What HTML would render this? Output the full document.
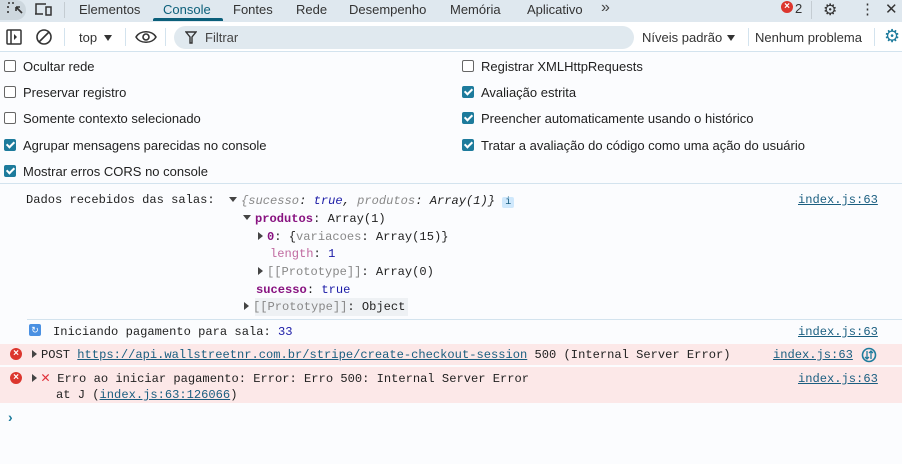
<!DOCTYPE html>
<html><head><meta charset="utf-8"><style>
*{margin:0;padding:0;box-sizing:border-box}
body{width:902px;height:464px;overflow:hidden;background:#fbfcfe;font-family:"Liberation Sans",sans-serif;font-size:13px;color:#1f1f1f;position:relative}
.a{position:absolute;white-space:nowrap}
.m{font-family:"Liberation Mono",monospace;font-size:12.1px}
.cb{position:absolute;width:12px;height:12px;border:1.5px solid #666;border-radius:2px;background:#fff}
.cb.on{background:#1d7b9c;border-color:#1d7b9c}
.cb.on:after{content:"";position:absolute;left:3px;top:0px;width:3px;height:6px;border:solid #fff;border-width:0 2px 2px 0;transform:rotate(45deg)}
.lnk{color:#1a5e80;text-decoration:underline}
.k{color:#881280}
.g{color:#888}
.b{color:#1a1aa6}
.tri{display:inline-block;width:0;height:0;border-top:4px solid transparent;border-bottom:4px solid transparent;border-left:5px solid #444;margin-right:4px}
.trd{display:inline-block;width:0;height:0;border-left:4px solid transparent;border-right:4px solid transparent;border-top:5px solid #444;margin-right:4px;vertical-align:2px}
.err{position:absolute;width:12px;height:12px;border-radius:50%;background:#dc362e;color:#fff;font-size:10px;line-height:12px;text-align:center;font-weight:bold}
</style></head><body>
<div class="a" style="left:0;top:0;width:902px;height:22px;background:#dfe8ef"></div>
<div class="a" style="left:0;top:0;width:26px;height:20px;background:#cdd7de;border-radius:0 10px 10px 0"></div>
<svg class="a" style="left:6px;top:1px" width="18" height="16"><path d="M2 2h2M6 2h2M2 5v2M2 10v2M10 6l6 6M10 6h4M10 6v4" stroke="#333" stroke-width="1.6" fill="none"/></svg>
<svg class="a" style="left:34px;top:1px" width="20" height="16"><path d="M2 13V3h10M1 13h8M12 6h5v8h-5z" stroke="#333" stroke-width="1.5" fill="none"/></svg>
<div class="a" style="left:64px;top:2px;width:1px;height:16px;background:#c4ccd2"></div>
<div class="a" style="left:79px;top:2px;color:#333">Elementos</div>
<div class="a" style="left:163px;top:2px;color:#0b5f7a">Console</div>
<div class="a" style="left:153px;top:18px;width:70px;height:3px;background:#0b5f7a;border-radius:2px 2px 0 0"></div>
<div class="a" style="left:233px;top:2px;color:#333">Fontes</div>
<div class="a" style="left:296px;top:2px;color:#333">Rede</div>
<div class="a" style="left:349px;top:2px;color:#333">Desempenho</div>
<div class="a" style="left:450px;top:2px;color:#333">Memória</div>
<div class="a" style="left:527px;top:2px;color:#333">Aplicativo</div>
<div class="a" style="left:601px;top:-1px;color:#444;font-size:16px">»</div>
<div class="err" style="left:781px;top:1px">×</div>
<div class="a" style="left:795px;top:1px;color:#333">2</div>
<div class="a" style="left:811px;top:1px;width:1px;height:18px;background:#c4ccd2"></div>
<div class="a" style="left:823px;top:0px;font-size:16px;color:#333">⚙</div>
<div class="a" style="left:860px;top:0px;font-size:15px;color:#333">⋮</div>
<div class="a" style="left:885px;top:0px;font-size:15px;color:#333">✕</div>
<div class="a" style="left:0;top:22px;width:902px;height:30px;background:#fff;border-bottom:1px solid #d3e3ee"></div>
<svg class="a" style="left:6px;top:29px" width="16" height="16"><rect x="1" y="1" width="14" height="14" rx="1" stroke="#333" stroke-width="1.5" fill="none"/><path d="M5 1v14" stroke="#333" stroke-width="1.5"/><path d="M8 5l3 3-3 3z" fill="#333"/></svg>
<svg class="a" style="left:35px;top:28px" width="18" height="18"><circle cx="9" cy="9" r="7" stroke="#333" stroke-width="1.6" fill="none"/><path d="M4 14L14 4" stroke="#333" stroke-width="1.6"/></svg>
<div class="a" style="left:64px;top:28px;width:1px;height:18px;background:#d3e3ee"></div>
<div class="a" style="left:79px;top:30px;color:#333">top</div>
<div class="a" style="left:104px;top:35px;border-left:4px solid transparent;border-right:4px solid transparent;border-top:6px solid #333"></div>
<div class="a" style="left:125px;top:28px;width:1px;height:18px;background:#d3e3ee"></div>
<svg class="a" style="left:135px;top:29px" width="22" height="16"><path d="M1 8C5 1 17 1 21 8C17 15 5 15 1 8z" stroke="#333" stroke-width="1.5" fill="none"/><circle cx="11" cy="8" r="3" stroke="#333" stroke-width="1.6" fill="none"/></svg>
<div class="a" style="left:165px;top:28px;width:1px;height:18px;background:#d3e3ee"></div>
<div class="a" style="left:174px;top:26px;width:460px;height:23px;background:#e0e9ef;border-radius:12px"></div>
<svg class="a" style="left:185px;top:31px" width="12" height="13"><path d="M1 1h10L7 6v6H5V6z" stroke="#333" stroke-width="1.4" fill="none"/></svg>
<div class="a" style="left:205px;top:30px;color:#444">Filtrar</div>
<div class="a" style="left:642px;top:30px;color:#333">Níveis padrão</div>
<div class="a" style="left:727px;top:35px;border-left:4.5px solid transparent;border-right:4.5px solid transparent;border-top:6px solid #333"></div>
<div class="a" style="left:748px;top:28px;width:1px;height:18px;background:#d3e3ee"></div>
<div class="a" style="left:755px;top:30px;color:#333">Nenhum problema</div>
<div class="a" style="left:874px;top:28px;width:1px;height:18px;background:#d3e3ee"></div>
<div class="a" style="left:884px;top:26px;font-size:18px;color:#1d7b9c">⚙</div>
<div class="cb" style="left:4px;top:60px"></div><div class="a" style="left:23px;top:59px">Ocultar rede</div>
<div class="cb" style="left:4px;top:86px"></div><div class="a" style="left:23px;top:85px">Preservar registro</div>
<div class="cb" style="left:4px;top:112px"></div><div class="a" style="left:23px;top:111px">Somente contexto selecionado</div>
<div class="cb on" style="left:4px;top:139px"></div><div class="a" style="left:23px;top:138px">Agrupar mensagens parecidas no console</div>
<div class="cb on" style="left:4px;top:165px"></div><div class="a" style="left:23px;top:164px">Mostrar erros CORS no console</div>
<div class="cb" style="left:462px;top:60px"></div><div class="a" style="left:481px;top:59px">Registrar XMLHttpRequests</div>
<div class="cb on" style="left:462px;top:86px"></div><div class="a" style="left:481px;top:85px">Avaliação estrita</div>
<div class="cb on" style="left:462px;top:112px"></div><div class="a" style="left:481px;top:111px">Preencher automaticamente usando o histórico</div>
<div class="cb on" style="left:462px;top:139px"></div><div class="a" style="left:481px;top:138px">Tratar a avaliação do código como uma ação do usuário</div>
<div class="a" style="left:0;top:183px;width:902px;height:1px;background:#d3e3ee"></div>
<div class="a m" style="left:26px;top:193px">Dados recebidos das salas:</div>
<div class="a m" style="left:229px;top:194px"><span class="trd"></span><i><span class="g">{sucesso</span>: <span class="b">true</span>, <span class="g">produtos</span>: Array(1)}</i> <span style="background:#cfe8fc;color:#1a5e80;font-size:10px;padding:0 3px;border-radius:2px">i</span></div>
<div class="a m" style="left:243px;top:212px"><span class="trd"></span><b class="k">produtos</b>: Array(1)</div>
<div class="a m" style="left:258px;top:230px"><span class="tri"></span><b class="k">0</b>: {<span class="g">variacoes</span>: Array(15)}</div>
<div class="a m" style="left:270px;top:247px"><span style="color:#c06aa0">length</span>: <span class="b">1</span></div>
<div class="a m" style="left:258px;top:265px"><span class="tri"></span><span class="g">[[Prototype]]</span>: Array(0)</div>
<div class="a m" style="left:256px;top:283px"><b class="k">sucesso</b>: <span class="b">true</span></div>
<div class="a" style="left:255px;top:298px;width:153px;height:18px;background:#eef1f4"></div>
<div class="a m" style="left:244px;top:300px"><span class="tri"></span><span class="g">[[Prototype]]</span>: Object</div>
<a class="a m lnk" style="left:798px;top:193px">index.js:63</a>
<div class="a" style="left:27px;top:319px;width:875px;height:1px;background:#d3e3ee"></div>
<div class="a" style="left:29px;top:324px;width:12px;height:12px;background:#4a90e2;border-radius:2px;color:#fff;font-size:9px;line-height:12px;text-align:center">↻</div>
<div class="a m" style="left:53px;top:325px">Iniciando pagamento para sala: <span class="b">33</span></div>
<a class="a m lnk" style="left:798px;top:325px">index.js:63</a>
<div class="a" style="left:0;top:344px;width:902px;height:21px;background:#fce8e8"></div>
<div class="err" style="left:10px;top:348px">×</div>
<div class="a m" style="left:32px;top:348px;color:#222"><span class="tri"></span>POST <a class="lnk">https://api.wallstreetnr.com.br/stripe/create-checkout-session</a> 500 (Internal Server Error)</div>
<a class="a m lnk" style="left:773px;top:348px">index.js:63</a>
<svg class="a" style="left:861px;top:347px" width="16" height="16"><circle cx="8" cy="8" r="6.5" stroke="#1d7b9c" stroke-width="1.6" fill="none"/><path d="M6 4v8M4 10l2 2 2-2M10 12V4M8 6l2-2 2 2" stroke="#1d7b9c" stroke-width="1.3" fill="none"/></svg>
<div class="a" style="left:0;top:367px;width:902px;height:36px;background:#fce8e8"></div>
<div class="err" style="left:10px;top:372px">×</div>
<div class="a m" style="left:32px;top:372px;color:#222;line-height:14px"><span class="tri"></span><span style="color:#e0303a;font-weight:bold;font-size:15px;line-height:14px">✕</span> Erro ao iniciar pagamento: Error: Erro 500: Internal Server Error</div>
<div class="a m" style="left:56px;top:388px;color:#222">at J (<a class="lnk">index.js:63:126066</a>)</div>
<a class="a m lnk" style="left:798px;top:372px">index.js:63</a>
<div class="a" style="left:8px;top:409px;color:#1d7b9c;font-size:14px;font-weight:bold">›</div>
</body></html>
